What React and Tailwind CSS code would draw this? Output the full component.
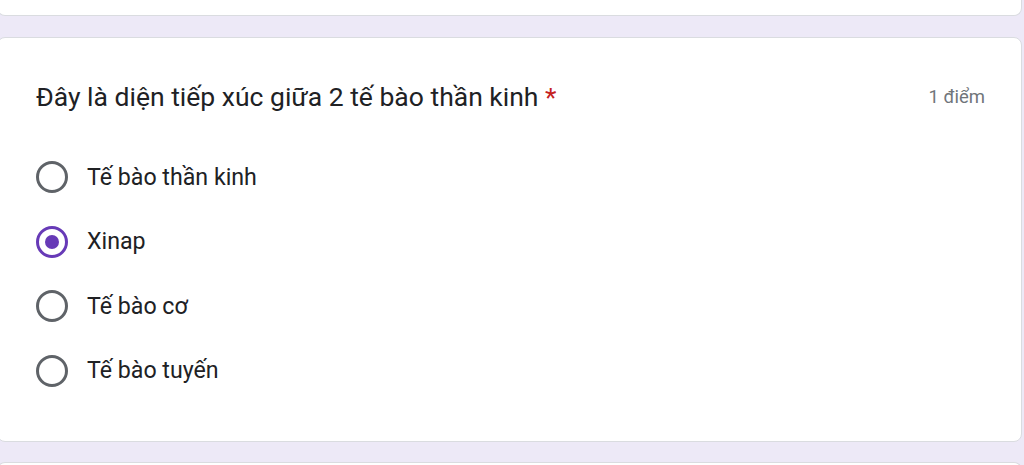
const options = [
  { label: 'Tế bào thần kinh', checked: false },
  { label: 'Xinap', checked: true },
  { label: 'Tế bào cơ', checked: false },
  { label: 'Tế bào tuyến', checked: false },
];

const Radio = ({ checked }) => (
  <span
    className={`flex h-[32px] w-[32px] shrink-0 items-center justify-center rounded-full border-[3px] ${
      checked ? 'border-[#673ab7]' : 'border-[#5f6368]'
    }`}
  >
    {checked && <span className="h-[14px] w-[14px] rounded-full bg-[#673ab7]" />}
  </span>
);

export default function App() {
  return (
    <div className="h-[465px] overflow-hidden bg-[#ede9f7] pr-[2px] font-['Roboto',sans-serif]">
      <div className="-ml-[3px] h-[16px] rounded-b-lg border border-t-0 border-[#dadce0] bg-white" />

      <div className="-ml-[3px] mt-[21px] rounded-lg border border-[#dadce0] bg-white pb-[38px] pl-[38px] pr-[36px] pt-[43px]">
        <div className="flex h-[32px] items-center justify-between">
          <div className="text-[26.5px] leading-[32px] text-[#202124]">
            Đây là diện tiếp xúc giữa 2 tế bào thần kinh <span className="text-[#c5221f]">*</span>
          </div>
          <div className="pt-[2px] text-[18.5px] text-[#70757a]">1 điểm</div>
        </div>

        <div className="mt-[32px] flex flex-col">
          {options.map((o) => (
            <div key={o.label} className="flex h-[64.5px] items-center gap-[19px]">
              <Radio checked={o.checked} />
              <span className="text-[23.2px] text-[#202124]">{o.label}</span>
            </div>
          ))}
        </div>
      </div>

      <div className="-ml-[3px] mt-[20px] h-[20px] rounded-t-lg border border-b-0 border-[#dadce0] bg-white" />
    </div>
  );
}
